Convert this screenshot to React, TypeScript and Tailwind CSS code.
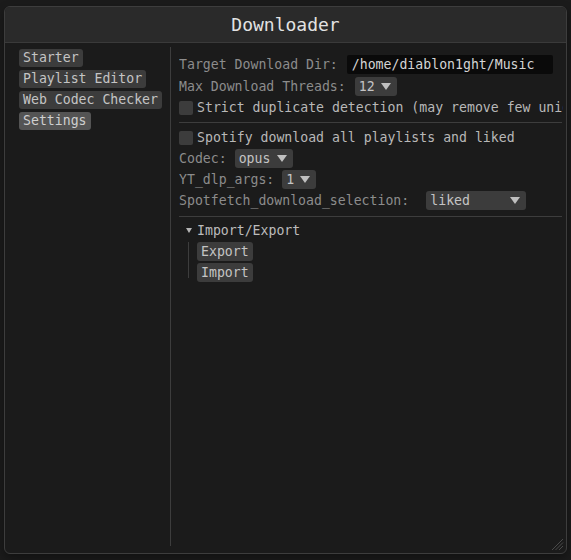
import React from 'react';

const mono = { fontFamily: '"DejaVu Sans Mono", "Liberation Mono", monospace' };

function Caret() {
  return (
    <svg width="10" height="7" viewBox="0 0 10 7" className="shrink-0">
      <path d="M0 0 H10 L5 7 Z" fill="#c0c0c0" />
    </svg>
  );
}

function Combo({ value, width }: { value: string; width: number }) {
  return (
    <div
      className="h-[19px] bg-[#3c3c3c] rounded-[3px] flex items-center justify-between pl-[4px] pr-[6px] text-[#c4c4c4] shrink-0"
      style={{ width }}
    >
      <span>{value}</span>
      <Caret />
    </div>
  );
}

function Check({ label }: { label: string }) {
  return (
    <div className="h-[19px] flex items-center whitespace-nowrap">
      <div className="w-[14px] h-[14px] bg-[#3c3c3c] rounded-[2px] shrink-0" />
      <span className="ml-[4px] text-[#b8b8b8]">{label}</span>
    </div>
  );
}

const navItems = ['Starter', 'Playlist Editor', 'Web Codec Checker', 'Settings'];

export default function App() {
  return (
    <div className="w-[571px] h-[560px] bg-[#1b1b1b] pt-[6px] pl-[4px] overflow-hidden" style={mono}>
      <div className="relative w-[563px] h-[548px] rounded-[6px] border border-[#3d3d3d] bg-[#1b1b1b] flex flex-col overflow-hidden shadow-[0_4px_10px_rgba(0,0,0,0.35)] text-[13.2px] leading-none">
        {/* title bar */}
        <div className="h-[36px] shrink-0 bg-[#2a2a2a] border-b border-[#3a3a3a] flex items-center justify-center">
          <span className="text-[18px] text-[#e2e2e2]">Downloader</span>
        </div>

        <div className="flex flex-1 min-h-0">
          {/* left panel */}
          <div className="w-[165px] shrink-0 pl-[14px] pt-[6px] flex flex-col gap-[3px] items-start">
            {navItems.map((item) => (
              <div
                key={item}
                className={
                  'h-[18px] px-[4px] rounded-[3px] flex items-center whitespace-nowrap ' +
                  (item === 'Settings' ? 'bg-[#545454] text-[#cfcfcf]' : 'bg-[#3c3c3c] text-[#c4c4c4]')
                }
              >
                {item}
              </div>
            ))}
          </div>

          <div className="w-px bg-[#3d3d3d] mt-[4px] mb-[7px] shrink-0" />

          {/* right panel */}
          <div className="flex-1 min-w-0 pl-[8px] pt-[12px] text-[#8c8c8c]">
            <div className="mr-[3px] overflow-hidden">
              <div className="h-[19px] flex items-center whitespace-nowrap">
                <span>Target Download Dir:</span>
                <div className="ml-[9px] w-[206px] h-[19px] bg-[#0a0a0a] rounded-[2px] flex items-center pl-[5px] text-[#d4d4d4]">
                  /home/diablon1ght/Music
                </div>
              </div>
              <div className="mt-[3px] h-[19px] flex items-center whitespace-nowrap">
                <span>Max Download Threads:</span>
                <div className="ml-[9px]">
                  <Combo value="12" width={42} />
                </div>
              </div>
              <div className="mt-[2px]">
                <Check label="Strict duplicate detection (may remove few unique tracks)" />
              </div>

              <div className="mt-[5px] h-px bg-[#3d3d3d] mr-[1px]" />

              <div className="mt-[5px]">
                <Check label="Spotify download all playlists and liked" />
              </div>
              <div className="mt-[2px] h-[19px] flex items-center whitespace-nowrap">
                <span>Codec:</span>
                <div className="ml-[8px]">
                  <Combo value="opus" width={58} />
                </div>
              </div>
              <div className="mt-[2px] h-[19px] flex items-center whitespace-nowrap">
                <span>YT_dlp_args:</span>
                <div className="ml-[8px]">
                  <Combo value="1" width={34} />
                </div>
              </div>
              <div className="mt-[2px] h-[19px] flex items-center whitespace-nowrap">
                <span>Spotfetch_download_selection:</span>
                <div className="ml-[17px]">
                  <Combo value="liked" width={100} />
                </div>
              </div>

              <div className="mt-[6px] h-px bg-[#3d3d3d] mr-[1px]" />

              {/* collapsing header */}
              <div className="mt-[4px] h-[19px] flex items-center whitespace-nowrap">
                <svg width="6" height="5" viewBox="0 0 6 5" className="ml-[7px] shrink-0">
                  <path d="M0 0 H6 L3 5 Z" fill="#b4b4b4" />
                </svg>
                <span className="ml-[5px] text-[#bcbcbc]">Import/Export</span>
              </div>
              <div className="mt-[2px] flex">
                <div className="ml-[9px] w-px bg-[#3d3d3d] mb-[4px]" />
                <div className="ml-[8px] flex flex-col gap-[2px]">
                  <div className="w-[56px] h-[19px] bg-[#3c3c3c] rounded-[3px] flex items-center pl-[4px] text-[#c4c4c4]">
                    Export
                  </div>
                  <div className="w-[56px] h-[19px] bg-[#3c3c3c] rounded-[3px] flex items-center pl-[4px] text-[#c4c4c4]">
                    Import
                  </div>
                </div>
              </div>
            </div>
          </div>
        </div>

        {/* resize grip */}
        <svg width="14" height="14" viewBox="0 0 14 14" className="absolute right-[2px] bottom-[2px]">
          <path d="M13 2 L2 13 M13 5.5 L5.5 13 M13 9 L9 13" stroke="#4a4a4a" strokeWidth="1" />
        </svg>
      </div>
    </div>
  );
}
